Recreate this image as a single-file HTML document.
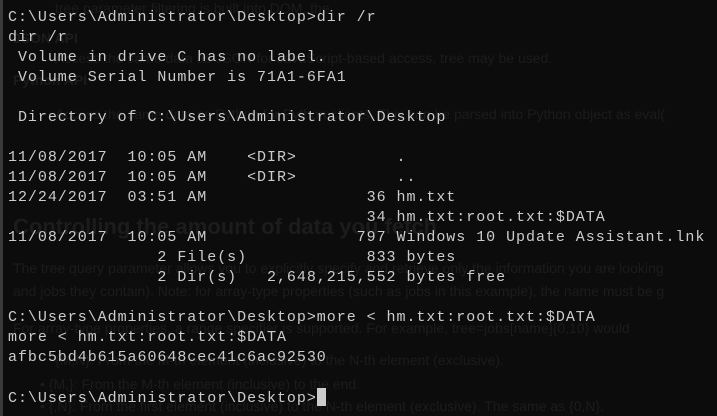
<!DOCTYPE html>
<html><head><meta charset="utf-8"><style>
html,body{margin:0;padding:0;width:717px;height:416px;overflow:hidden;background:#0c0c0c;}
.bar{position:absolute;left:0;top:0;width:3px;height:416px;background:#3a3a3a;}
.bg{position:absolute;font-family:"Liberation Sans",sans-serif;color:#1c1c1c;white-space:nowrap;font-size:14px;}
pre{position:absolute;left:8px;top:8px;margin:0;font-family:"Liberation Mono",monospace;font-size:15px;letter-spacing:0.96px;line-height:20px;color:#cccccc;}
.cur{display:inline-block;width:9px;height:18px;background:#cccccc;vertical-align:-4px;}
</style></head><body>
<div class="bar"></div>
<div class="bg" style="left:55px;top:0px">tree parameter filtering is built into DOM, the</div>
<div class="bg" style="left:13px;top:30px;font-weight:bold">JSON API</div>
<div class="bg" style="left:55px;top:50px">Access the same data as JSON for JavaScript-based access. tree may be used.</div>
<div class="bg" style="left:13px;top:72px;font-weight:bold">Python API</div>
<div class="bg" style="left:55px;top:106px">Access the same data as Python for Python clients. This can be parsed into Python object as eval(</div>
<div class="bg" style="left:13px;top:214px;font-size:22px;font-weight:bold">Controlling the amount of data you fetch</div>
<div class="bg" style="left:13px;top:260px">The tree query parameter allows you to explicitly specify and retrieve only the information you are looking</div>
<div class="bg" style="left:13px;top:283px">and jobs they contain). Note: for array-type properties (such as jobs in this example), the name must be g</div>
<div class="bg" style="left:13px;top:320px">For array-type properties, a range specifier is supported. For example, tree=jobs[name]{0,10} would</div>
<div class="bg" style="left:55px;top:352px">{M,N}: From the M-th element (inclusive) to the N-th element (exclusive).</div>
<div class="bg" style="left:40px;top:376px">• {M,}: From the M-th element (inclusive) to the end.</div>
<div class="bg" style="left:40px;top:398px">• {,N}: From the first element (inclusive) to the N-th element (exclusive). The same as {0,N}.</div>
<pre>C:\Users\Administrator\Desktop>dir /r
dir /r
 Volume in drive C has no label.
 Volume Serial Number is 71A1-6FA1

 Directory of C:\Users\Administrator\Desktop

11/08/2017  10:05 AM    &lt;DIR&gt;          .
11/08/2017  10:05 AM    &lt;DIR&gt;          ..
12/24/2017  03:51 AM                36 hm.txt
                                    34 hm.txt:root.txt:$DATA
11/08/2017  10:05 AM               797 Windows 10 Update Assistant.lnk
               2 File(s)            833 bytes
               2 Dir(s)   2,648,215,552 bytes free

C:\Users\Administrator\Desktop>more &lt; hm.txt:root.txt:$DATA
more &lt; hm.txt:root.txt:$DATA
afbc5bd4b615a60648cec41c6ac92530

C:\Users\Administrator\Desktop><span class="cur"></span></pre>
</body></html>
